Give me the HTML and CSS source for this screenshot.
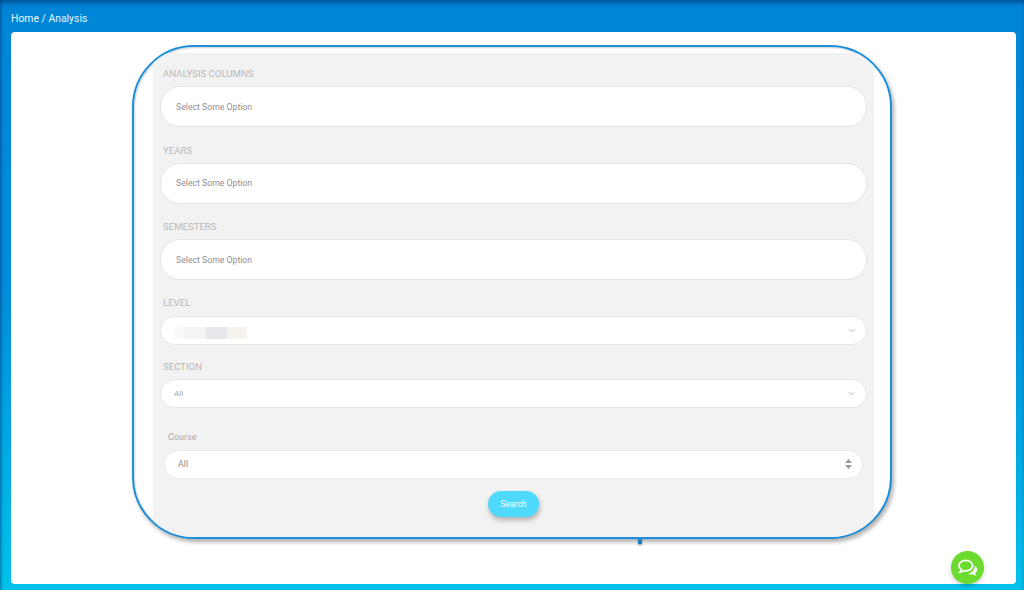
FILE: index.html
```html
<!DOCTYPE html>
<html lang="en">
<head>
  <meta charset="UTF-8" />
  <meta name="viewport" content="width=device-width, initial-scale=1.0"/>
  <title>Analysis</title>
  <link rel="stylesheet" href="styles.css">
</head>
<body>

  <div class="breadcrumb">Home / Analysis</div>

  <div class="content-card">
    <div class="search-wrap">
      <div class="search-frame">
        <form class="search-panel">

          <div class="field field-tall">
            <label class="field-label">Analysis Columns</label>
            <div class="multi-select">Select Some Option</div>
          </div>

          <div class="field field-tall">
            <label class="field-label">Years</label>
            <div class="multi-select">Select Some Option</div>
          </div>

          <div class="field field-tall">
            <label class="field-label">Semesters</label>
            <div class="multi-select">Select Some Option</div>
          </div>

          <div class="field field-level">
            <label class="field-label">Level</label>
            <div class="drop-select">
              <span class="blurred-value">
                <span class="blur-a"></span>
                <span class="blur-b"></span>
                <span class="blur-c"></span>
                <span class="blur-d"></span>
              </span>
              <svg class="chevron" viewBox="0 0 8 5"><path d="M1 1l3 3 3-3" fill="none" stroke="#b4b4b4" stroke-width="1.1"/></svg>
            </div>
          </div>

          <div class="field field-section">
            <label class="field-label">Section</label>
            <div class="drop-select">
              <span class="drop-text">All</span>
              <svg class="chevron" viewBox="0 0 8 5"><path d="M1 1l3 3 3-3" fill="none" stroke="#b4b4b4" stroke-width="1.1"/></svg>
            </div>
          </div>

          <div class="field-course">
            <label class="course-label">Course</label>
            <div class="course-select">
              <span>All</span>
              <svg class="sort-arrows" viewBox="0 0 7 10"><path d="M3.500 0L7 4H0zM0 6h7l-3.500 4z" fill="#999"/></svg>
            </div>
          </div>

          <div class="actions">
            <button type="button" class="search-btn">Search</button>
          </div>
        </form>
      </div>
      <span class="frame-stub"></span>
    </div>
  </div>

  <div class="chat-btn">
    <svg viewBox="0 0 24 20" width="22" height="18">
      <path d="M9.500 1.500c4.300 0 7.700 2.600 7.700 5.800s-3.400 5.800-7.700 5.800c-.8 0-1.500-.1-2.200-.3-1.200.9-2.600 1.500-4.300 1.700 .8-.9 1.400-2 1.600-3C2.900 10.500 1.800 9 1.800 7.300c0-3.200 3.400-5.800 7.700-5.800z" fill="none" stroke="#fff" stroke-width="1.900"/>
      <path d="M19.500 7.500c1.700 1 2.800 2.500 2.800 4.200 0 1.600-.9 3-2.400 4 .2 1 .8 2 1.600 2.900-1.700-.2-3.100-.8-4.300-1.700-1.800.4-3.700.2-5.300-.5 3.800-.5 7.500-3.300 7.600-8.900z" fill="#fff"/>
    </svg>
  </div>

</body>
</html>
```

FILE: styles.css
```css
* {
  box-sizing: border-box;
}

html, body {
  height: 100%;
}

body {
  font-family: Roboto, "Liberation Sans", sans-serif;
  background: linear-gradient(to bottom, #0085d6 0%, #008ddb 50%, #00c2ea 100%);
  box-shadow: inset 0 4px 4px -1px rgba(0,50,110,0.6), inset 3px 0 3px -2px rgba(0,50,110,0.4);
  margin: 0;
  padding: 0 8px 6px 11px;
  display: flex;
  flex-direction: column;
  overflow: hidden;
}

.breadcrumb {
  height: 32px;
  padding-top: 12px;
  color: #e8f6ff;
  font-size: 10.4px;
  line-height: 14px;
}

.content-card {
  flex: 1;
  background-color: white;
  border-radius: 4px;
  padding: 13px 0 0 121px;
}

.search-wrap {
  position: relative;
  width: 760px;
  height: 494px;
}

.search-frame {
  height: 100%;
  padding: 6px 16px 0 19px;
  border: 2px solid #1b8fd9;
  border-radius: 62px;
  box-shadow: 2px 3px 4px rgba(0,0,0,0.32), inset 1px 1px 2px rgba(0,0,0,0.18);
  overflow: hidden;
  background-color: white;
}

.search-panel {
  height: 484px;
  background-color: #f2f2f2;
  padding: 0 7px;
  display: flex;
  flex-direction: column;
}

.field-label {
  display: block;
  color: #b9b9b9;
  font-size: 9.6px;
  line-height: 14px;
  text-transform: uppercase;
}

.field {
  padding-left: 3px;
}

.field-tall {
  height: 76.5px;
  padding-top: 14px;
}

.field-tall .field-label {
  margin-bottom: 5px;
}

.field-level {
  height: 77px;
  padding-top: 13px;
}

.field-level .field-label {
  margin-bottom: 6.5px;
}

.field-section {
  height: 71px;
}

.field-section .field-label {
  margin-bottom: 5px;
}

.multi-select {
  margin-left: -3px;
  height: 41px;
  background-color: white;
  border: 1px solid #e4e4e4;
  border-radius: 20px;
  padding: 0 15px;
  display: flex;
  align-items: center;
  color: #8f8f8f;
  font-size: 8.7px;
}

.drop-select {
  margin-left: -3px;
  height: 29px;
  background-color: white;
  border: 1px solid #e4e4e4;
  border-radius: 15px;
  padding: 0 11px 0 13px;
  display: flex;
  align-items: center;
  justify-content: space-between;
}

.drop-text {
  color: #a5a5a5;
  font-size: 8px;
}

.chevron {
  width: 7px;
  height: 5px;
}

.blurred-value {
  display: flex;
  height: 12px;
  margin-top: 4px;
}

.blurred-value span {
  display: block;
  height: 12px;
}

.blur-a {
  width: 10px;
  background-color: #f8fbfd;
}

.blur-b {
  width: 22px;
  background-color: #f3f4f6;
}

.blur-c {
  width: 21px;
  background-color: #e8e8ec;
}

.blur-d {
  width: 20px;
  background-color: #f6f2ee;
}

.field-course {
  padding: 0 4px;
}

.course-label {
  display: block;
  color: #ababab;
  font-size: 9px;
  line-height: 12px;
  padding-left: 4px;
  margin-bottom: 7px;
}

.course-select {
  height: 29px;
  background-color: white;
  border: 1px solid #e9e9e9;
  border-radius: 15px;
  padding: 0 10px 0 13px;
  display: flex;
  align-items: center;
  justify-content: space-between;
  color: #8d8d8d;
  font-size: 9px;
}

.sort-arrows {
  width: 7px;
  height: 10px;
}

.actions {
  display: flex;
  justify-content: center;
  margin-top: 12px;
}

.search-btn {
  width: 51px;
  height: 26px;
  background-color: #4fd9fb;
  color: white;
  border: none;
  border-radius: 13px;
  font-family: inherit;
  font-size: 8.5px;
  box-shadow: 1px 3px 5px rgba(0,0,0,0.28);
  cursor: pointer;
}

.frame-stub {
  position: absolute;
  left: 506px;
  bottom: -5px;
  width: 4px;
  height: 5px;
  background-color: #1b7fc4;
  box-shadow: 0 1px 2px rgba(0,0,0,0.4);
}

.chat-btn {
  position: fixed;
  left: 951px;
  top: 551px;
  width: 33px;
  height: 33px;
  background-color: #6bdc2f;
  border-radius: 50%;
  box-shadow: 0 2px 4px rgba(0,0,0,0.2);
  display: flex;
  align-items: center;
  justify-content: center;
}
```
